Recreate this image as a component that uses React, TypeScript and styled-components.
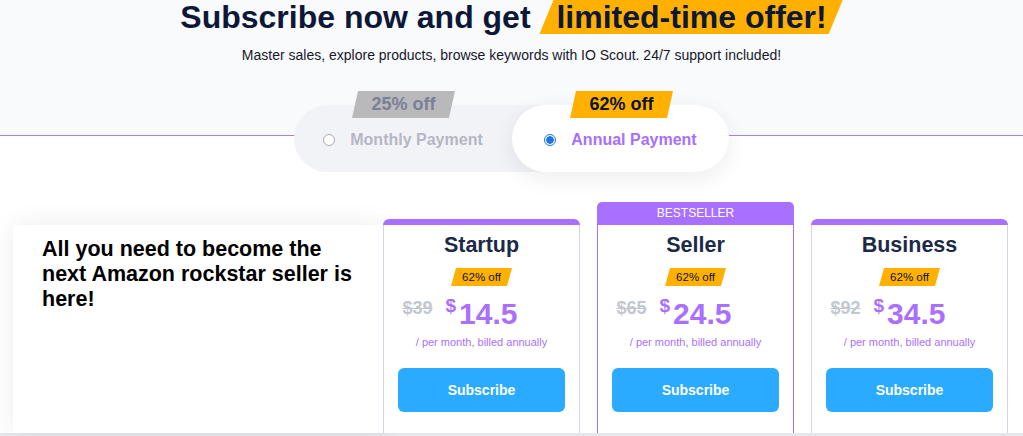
import React from "react"
import styled, {createGlobalStyle} from "styled-components"

const plans = [
    {name: "Startup", old: "$39", price: "14.5", best: false},
    {name: "Seller", old: "$65", price: "24.5", best: true},
    {name: "Business", old: "$92", price: "34.5", best: false},
]

export default function App()
{
    return (
        <>
            <GlobalStyle/>
            <Hero>
                <Title>
                    Subscribe now and get <Highlight>limited-time offer!</Highlight>
                </Title>
                <Subtitle>Master sales, explore products, browse keywords with IO Scout. 24/7 support included!</Subtitle>
            </Hero>

            <ToggleBand>
                <Toggle>
                    <Option>
                        <OffBadge $tone="gray">25% off</OffBadge>
                        <Radio/>
                        <OptionLabel>Monthly Payment</OptionLabel>
                    </Option>
                    <Option $active>
                        <OffBadge $tone="orange">62% off</OffBadge>
                        <Radio $checked/>
                        <OptionLabel $active>Annual Payment</OptionLabel>
                    </Option>
                </Toggle>
            </ToggleBand>

            <PricingRow>
                <IntroCard>
                    <IntroText>All you need to become the next Amazon rockstar seller is here!</IntroText>
                </IntroCard>

                <PlanGrid>
                    {plans.map(plan => (
                        <PlanColumn key={plan.name}>
                            <Cap>
                                <Tab $best={plan.best}>{plan.best && "BESTSELLER"}</Tab>
                            </Cap>
                            <PlanBody $best={plan.best}>
                                <PlanName>{plan.name}</PlanName>
                                <Discount>62% off</Discount>
                                <PriceRow>
                                    <OldPrice>{plan.old}</OldPrice>
                                    <NewPrice>
                                        <Dollar>$</Dollar>
                                        <Amount>{plan.price}</Amount>
                                    </NewPrice>
                                </PriceRow>
                                <Billing>/ per month, billed annually</Billing>
                                <SubscribeButton>Subscribe</SubscribeButton>
                            </PlanBody>
                        </PlanColumn>
                    ))}
                </PlanGrid>
            </PricingRow>
            <BottomStrip/>
        </>
    )
}

const GlobalStyle = createGlobalStyle`
    body {
        margin: 0;
        background: #ffffff;
        font-family: "Liberation Sans", Arial, sans-serif;
        overflow: hidden;
    }
`

const Hero = styled.div`
    background: #f9fafc;
    display: flex;
    flex-direction: column;
    align-items: center;
`

const Title = styled.h1`
    margin: 0;
    font-size: 32px;
    line-height: 34px;
    font-weight: 700;
    color: #0d1839;
    white-space: pre;
`

const Highlight = styled.span`
    display: inline-block;
    vertical-align: top;
    height: 34px;
    padding: 0 16px 0 17px;
    background: #ffb000;
    clip-path: polygon(14px 0, 100% 0, calc(100% - 14px) 100%, 0 100%);
`

const Subtitle = styled.p`
    margin: 12px 0 0;
    font-size: 14px;
    line-height: 18px;
    color: #16182a;
`

const ToggleBand = styled.div`
    display: flex;
    justify-content: center;
    padding: 41px 0 30px;
    background: linear-gradient(to bottom, #f9fafc 0 71px, #a77ff0 71px 72px, #ffffff 72px);
`

const Toggle = styled.div`
    display: grid;
    grid-template-columns: 218px 217px;
    height: 67px;
    border-radius: 34px;
    background: #f2f3f6;
`

const Option = styled.div<{$active?: boolean}>`
    position: relative;
    display: flex;
    align-items: center;
    justify-content: center;
    gap: 15px;
    padding-top: 3px;
    border-radius: 34px;
    background: ${p => p.$active ? "#ffffff" : "transparent"};
    box-shadow: ${p => p.$active ? "0 6px 22px rgba(20, 20, 50, 0.08)" : "none"};
`

const OffBadge = styled.span<{$tone: "gray" | "orange"}>`
    position: absolute;
    top: -14px;
    left: 58px;
    width: 103px;
    height: 27px;
    line-height: 27px;
    text-align: center;
    font-size: 18px;
    font-weight: 700;
    background: ${p => p.$tone === "orange" ? "#ffb000" : "#b9b9bb"};
    color: ${p => p.$tone === "orange" ? "#0d1333" : "#7a8097"};
    clip-path: polygon(6px 0, 100% 0, calc(100% - 6px) 100%, 0 100%);
`

const Radio = styled.span<{$checked?: boolean}>`
    box-sizing: border-box;
    width: 12px;
    height: 12px;
    border-radius: 50%;
    border: 1px solid ${p => p.$checked ? "#1a73e8" : "#a9a9b0"};
    background: ${p => p.$checked ? "radial-gradient(circle, #1a73e8 0 3.5px, #ffffff 4px)" : "#ffffff"};
`

const OptionLabel = styled.span<{$active?: boolean}>`
    font-size: 16px;
    font-weight: 700;
    color: ${p => p.$active ? "#a66ffd" : "#b5b6c6"};
`

const PricingRow = styled.div`
    display: flex;
    height: 231px;
    padding-left: 13px;
`

const IntroCard = styled.div`
    width: 370px;
    margin-top: 23px;
    padding: 12px 0 0 29px;
    box-sizing: border-box;
    background: #ffffff;
    border-radius: 4px 0 0 0;
    box-shadow: 0 0 26px rgba(0, 0, 0, 0.08);
`

const IntroText = styled.h3`
    margin: 0;
    max-width: 325px;
    font-size: 21.5px;
    line-height: 25px;
    font-weight: 700;
    color: #000000;
`

const PlanGrid = styled.div`
    display: grid;
    grid-template-columns: repeat(3, 197px);
    column-gap: 17px;
`

const PlanColumn = styled.div`
    display: flex;
    flex-direction: column;
`

const Cap = styled.div`
    height: 23px;
    display: flex;
    align-items: flex-end;
`

const Tab = styled.div<{$best: boolean}>`
    flex: 1;
    height: ${p => p.$best ? "23px" : "6px"};
    line-height: 23px;
    border-radius: ${p => p.$best ? "5px 5px 0 0" : "6px 6px 0 0"};
    background: #a970ff;
    color: #ffffff;
    font-size: 12px;
    text-align: center;
`

const PlanBody = styled.div<{$best: boolean}>`
    flex: 1;
    display: flex;
    flex-direction: column;
    align-items: center;
    padding-top: 7px;
    background: #ffffff;
    border: 1px solid ${p => p.$best ? "#a970ff" : "#d6d3e2"};
    border-top: none;
    border-bottom: none;
`

const PlanName = styled.div`
    font-size: 21.5px;
    line-height: 26px;
    font-weight: 700;
    color: #1c2a48;
`

const Discount = styled.div`
    margin-top: 10px;
    width: 61px;
    height: 18px;
    line-height: 18px;
    font-size: 11.5px;
    text-align: center;
    color: #0d1333;
    background: #ffb000;
    clip-path: polygon(5px 0, 100% 0, calc(100% - 5px) 100%, 0 100%);
`

const PriceRow = styled.div`
    margin-top: 13px;
    width: 100%;
    display: grid;
    grid-template-columns: 1fr auto 1fr;
    align-items: start;
`

const OldPrice = styled.span`
    justify-self: end;
    margin-right: 13px;
    font-size: 18px;
    line-height: 18px;
    font-weight: 700;
    color: #c3c7cf;
    text-decoration: line-through;
`

const NewPrice = styled.div`
    display: flex;
    align-items: flex-start;
    color: #a970ff;
    font-weight: 700;
`

const Dollar = styled.span`
    margin: -3px 3px 0 0;
    font-size: 19px;
    line-height: 19px;
`

const Amount = styled.span`
    font-size: 30px;
    line-height: 30px;
`

const Billing = styled.div`
    margin-top: 7px;
    font-size: 11px;
    line-height: 13px;
    color: #a970ff;
`

const SubscribeButton = styled.button`
    margin-top: 19px;
    width: 167px;
    height: 44px;
    border: none;
    border-radius: 6px;
    background: #2aabff;
    color: #ffffff;
    font-family: inherit;
    font-size: 14px;
    font-weight: 700;
    cursor: pointer;
`

const BottomStrip = styled.div`
    height: 20px;
    background: #e6e7eb;
`
